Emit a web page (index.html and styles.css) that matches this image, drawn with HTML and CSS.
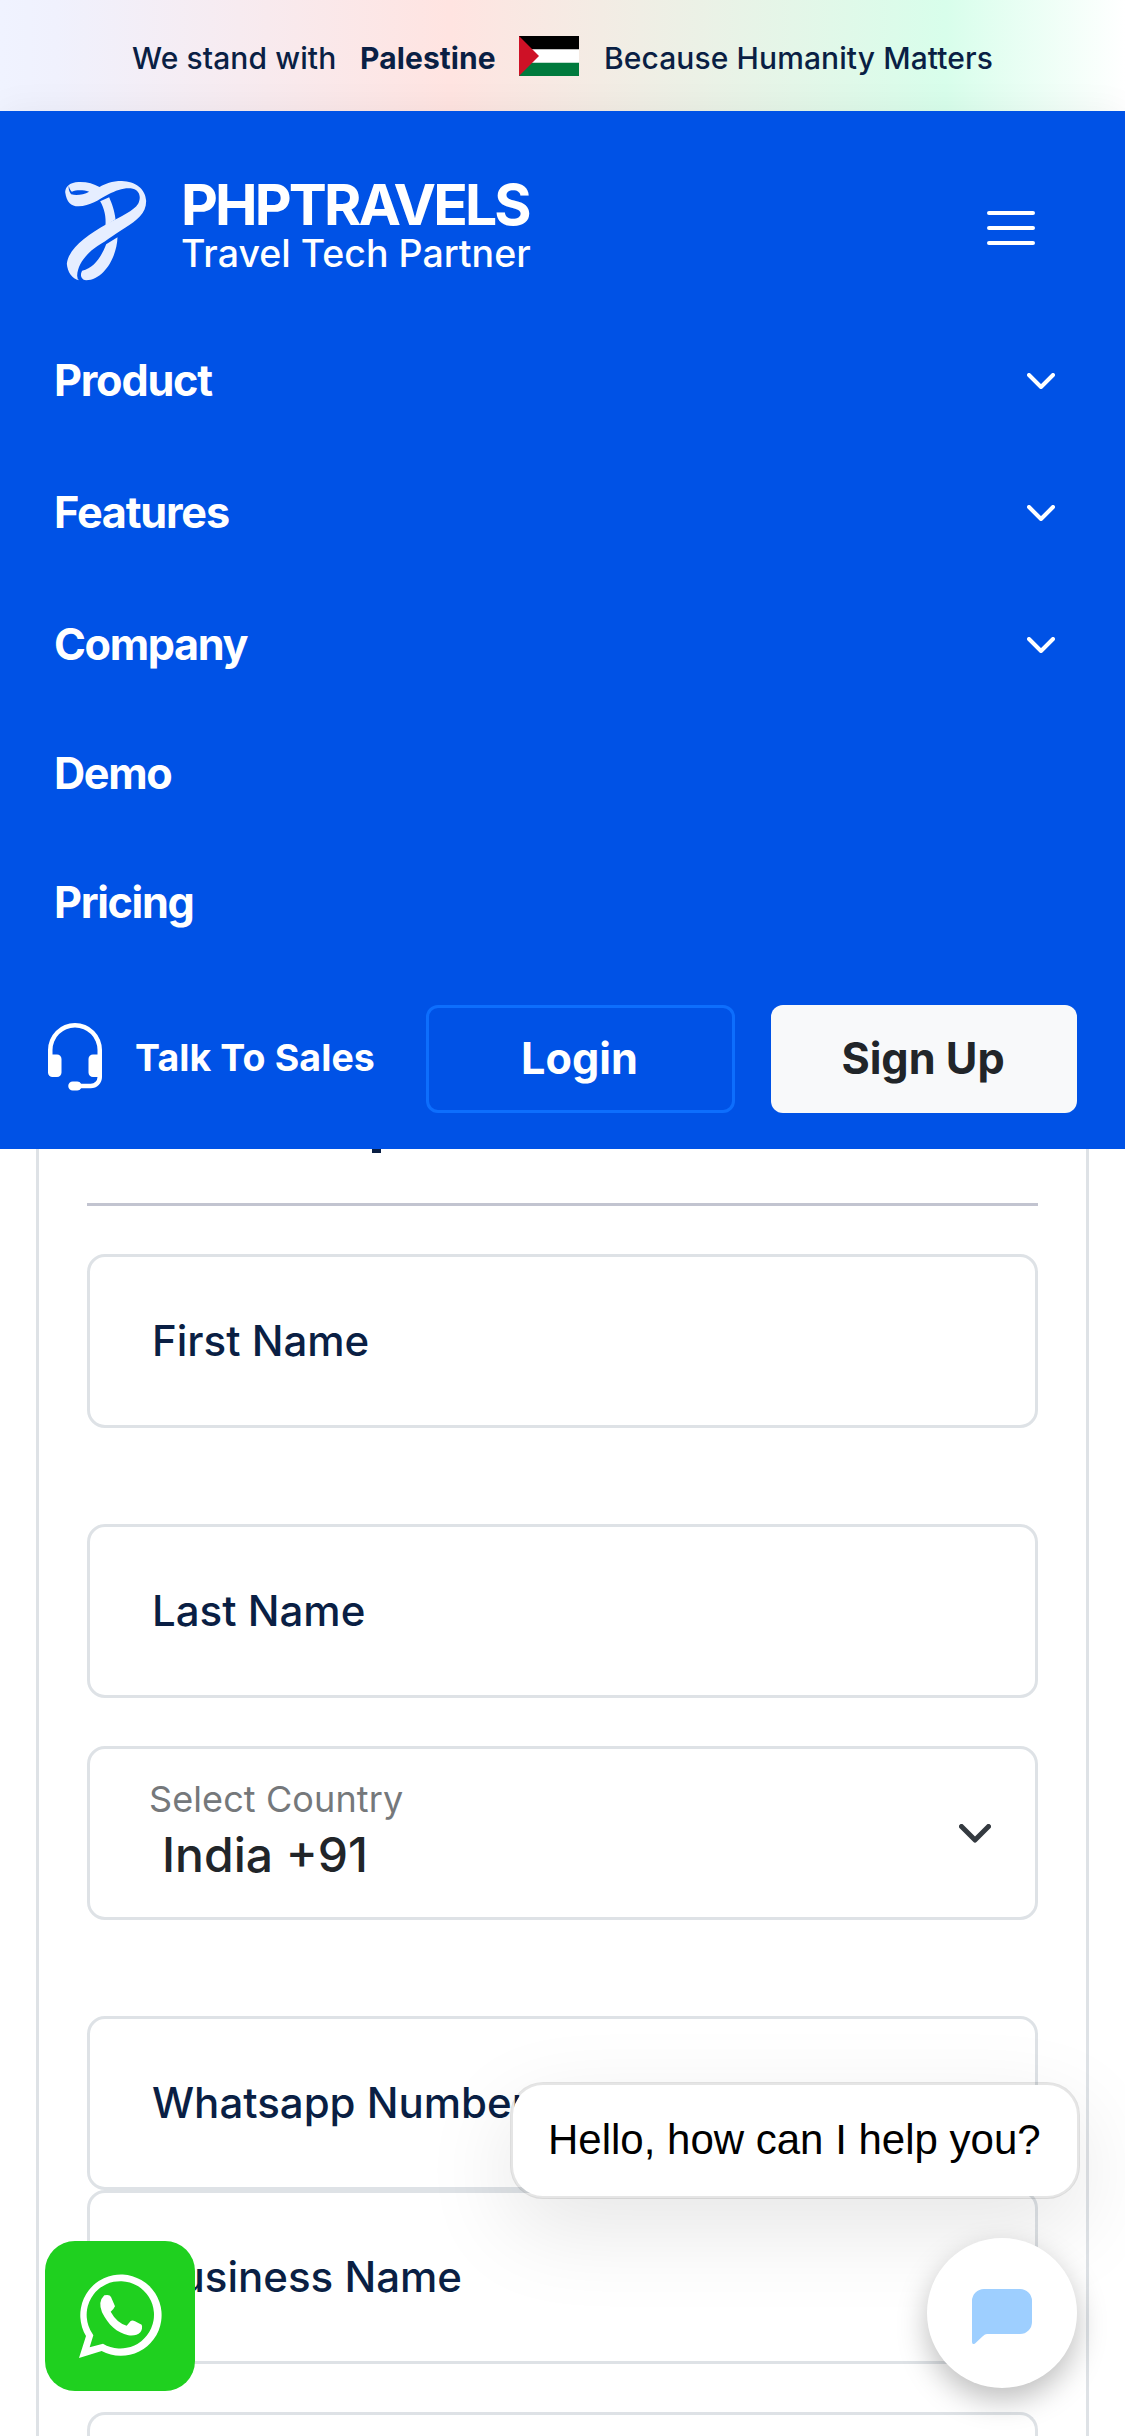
FILE: index.html
```html
<!DOCTYPE html>
<html lang="en">
<head>
<meta charset="utf-8">
<title>PHPTRAVELS</title>
<link rel="stylesheet" href="styles.css">
</head>
<body>
<div class="banner">
  <span class="stand">We stand with</span>
  <strong class="country">Palestine</strong>
  <svg class="flag" viewBox="0 0 60 40"><path fill="#fff" d="M0 0h60v40H0z"/><path d="M0 0h60v13.2H0z"/><path fill="#007a3d" d="M0 26.7h60V40H0z"/><path fill="#ce1126" d="M0 0l20 20L0 40z"/></svg>
  <span class="because">Because Humanity Matters</span>
</div>
<header class="header">
  <div class="topbar">
    <svg class="mark" viewBox="75 62 245 300" fill="#e6eeff">
      <path fill-rule="evenodd" d="M178 80C160 70 140 64 115 65C90 66 76 78 75 95C79 126 92 138 115 138C150 138 175 118 205 102C230 88 258 80 278 85C300 91 303 112 294 130C280 152 245 166 200 191C140 225 85 265 80 310C82 335 95 354 117 360Q111 356 111 346C112 312 140 278 172 257C200 240 235 214 255 202C290 180 318 160 318 122C316 85 285 63 245 62C215 62 195 70 178 80ZM95 94C110 88 130 89 147 94C130 103 110 106 93 102C87 95 84 84 86 77C88 86 91 90 95 94Z"/>
      <path d="M180 123L207 111C215 130 223 150 226 177L196 196C198 170 193 145 180 123Z"/>
      <path d="M232 231C230 290 192 358 138 360C120 358 120 340 126 331C165 322 185 285 198 252Z"/>
    </svg>
    <div class="brand"><b>PHPTRAVELS</b><span>Travel Tech Partner</span></div>
    <svg class="menu" viewBox="0 0 48 34" stroke="#fff" stroke-width="4" stroke-linecap="round"><path d="M2 2H46M2 17H46M2 32H46"/></svg>
  </div>
  <nav class="nav">
    <a class="item drop">Product<svg class="chev" viewBox="0 0 28 16"><path d="M2 2L14 14L26 2"/></svg></a>
    <a class="item drop">Features<svg class="chev" viewBox="0 0 28 16"><path d="M2 2L14 14L26 2"/></svg></a>
    <a class="item">Company<svg class="chev" viewBox="0 0 28 16"><path d="M2 2L14 14L26 2"/></svg></a>
    <a class="item">Demo</a>
    <a class="item">Pricing</a>
  </nav>
  <div class="actions">
    <svg class="headset" viewBox="0 0 16 16" fill="#fff"><path d="M8 1a5 5 0 0 0-5 5v1h1a1 1 0 0 1 1 1v3a1 1 0 0 1-1 1H3a1 1 0 0 1-1-1V6a6 6 0 1 1 12 0v6a2.5 2.5 0 0 1-2.5 2.500H9.366a1 1 0 0 1-.866.5h-1a1 1 0 1 1 0-2h1a1 1 0 0 1 .866.5H11.500A1.500 1.500 0 0 0 13 12h-1a1 1 0 0 1-1-1V8a1 1 0 0 1 1-1h1V6a5 5 0 0 0-5-5z"/></svg>
    <span class="talk">Talk To Sales</span>
    <a class="btn login">Login</a>
    <a class="btn signup">Sign Up</a>
  </div>
</header>
<main class="card">
  <div class="title-tail"></div>
  <hr class="rule">
  <form class="form">
    <div class="field gap-l">First Name</div>
    <div class="field gap-s">Last Name</div>
    <div class="field select gap-l">
      <div class="choice"><span class="hint">Select Country</span><span class="value">India +91</span></div>
      <svg class="arrow" viewBox="0 0 32 19"><path d="M2.5 2.500L16 16L29.500 2.500"/></svg>
    </div>
    <div class="field">Whatsapp Number</div>
    <div class="field gap-s">Business Name</div>
    <div class="field cut"></div>
  </form>
</main>
<a class="whatsapp">
  <svg viewBox="0 0 450 450" fill="#fff"><path fill-rule="evenodd" d="M123 285A122 122 0 1 1 170 330L102 351ZM145 283L134 319L174 308A101 101 0 1 0 141 276Z"/><path d="M178 163Q194 159 198 168L210 196Q207 204 197 212Q215 245 245 254L257 240Q262 236 270 241L290 251Q294 262 286 274Q274 286 250 283C215 275 190 252 171 214Q158 182 178 163Z"/></svg>
</a>
<div class="bubble">Hello, how can I help you?</div>
<a class="chat"><svg viewBox="0 0 60 56"><path fill="#9ecfff" d="M12 0H48A12 12 0 0 1 60 12V33A12 12 0 0 1 48 45H15Q13 45 11 47L3 54.500Q0 56 0 53V12A12 12 0 0 1 12 0Z"/></svg></a>
</body>
</html>
```
FILE: styles.css
```css
* { box-sizing: border-box; }
html, body { margin: 0; height: 2436px; overflow: hidden; }
body {
  position: relative;
  width: 1125px;
  background: #fff;
  font-family: Inter, "Liberation Sans", sans-serif;
  font-weight: 500;
  color: #0a1f44;
}
svg { display: block; flex: none; }

.banner {
  display: flex;
  align-items: center;
  height: 111px;
  padding: 0 0 0 132px;
  font-size: 30px;
  line-height: 40px;
  white-space: nowrap;
  background: linear-gradient(90deg, #f0f3ff 0%, #f0f1fd 5%, #ffe4e1 40%, #d8feeb 84%, #fff 100%);
}
.stand { width: 228px; padding-top: 5px; letter-spacing: .1px; }
.country { width: 159px; padding-top: 5px; font-weight: 700; letter-spacing: .1px; }
.flag { width: 60px; height: 40px; }
.because { margin-left: 25px; padding-top: 5px; letter-spacing: .1px; }

.header {
  height: 1038px;
  background: #0052e6;
  color: #fff;
  box-shadow: 0 0 36px rgba(0, 0, 0, .05);
  clip-path: inset(-40px 0 0 0);
}
.topbar { display: flex; height: 237px; padding: 68px 90px 0 65px; }
.mark { width: 82px; height: 100px; margin-top: 2px; }
.brand { display: flex; flex-direction: column; margin-left: 34px; }
.brand b { font-size: 57px; line-height: 52px; font-weight: 700; letter-spacing: -2.9px; }
.brand span { font-size: 37.5px; line-height: 45px; }
.menu { width: 48px; height: 34px; margin: 32px 0 0 auto; fill: none; }

.nav { display: flex; flex-direction: column; height: 657px; padding: 0 70px 0 54px; }
.item {
  display: flex;
  justify-content: space-between;
  align-items: flex-start;
  height: 129px;
  font-size: 43.2px;
  line-height: 65px;
  font-weight: 700;
  letter-spacing: -1.35px;
}
.drop { height: 132px; letter-spacing: -1.2px; }
.chev { width: 28px; height: 16px; margin-top: 25px; fill: none; stroke: #fff; stroke-width: 4; stroke-linecap: round; stroke-linejoin: round; }

.actions { display: flex; align-items: center; height: 108px; padding: 0 48px 0 39px; }
.headset { width: 72px; height: 72px; }
.talk { width: 291px; margin-left: 24px; padding-bottom: 4px; font-size: 37.5px; font-weight: 700; letter-spacing: .1px; }
.btn {
  display: flex;
  align-items: center;
  justify-content: center;
  height: 108px;
  padding: 0 2px 2px 0;
  border-radius: 12px;
  font-size: 43.2px;
  font-weight: 700;
}
.login { width: 309px; border: 3px solid #0d6efd; }
.signup { width: 306px; margin-left: 36px; background: #f8f9fa; color: #212529; }

.card {
  height: 1287px;
  margin: 0 36px;
  padding: 0 48px;
  border: solid #dee2e6;
  border-width: 0 3px;
  background: #fff;
}
.title-tail { width: 9px; height: 4px; margin-left: 285px; background: #0a1f44; }
.rule { height: 3px; margin: 50px 0 48px; border: 0; background: #c2c4d0; }
.form { display: flex; flex-direction: column; }
.field {
  display: flex;
  align-items: center;
  height: 174px;
  padding: 0 0 2px 62px;
  border: 3px solid #dee2e6;
  border-radius: 18px;
  font-size: 42px;
}
.cut { height: 24px; border-bottom: 0; border-radius: 18px 18px 0 0; }
.gap-l { margin-bottom: 96px; }
.gap-s { margin-bottom: 48px; }
.select { justify-content: space-between; padding: 0 44px 0 59px; }
.choice { display: flex; flex-direction: column; padding-bottom: 4px; }
.hint { font-size: 36px; line-height: 48px; font-weight: 400; letter-spacing: .1px; color: #75787b; }
.value { padding-left: 13px; font-size: 48px; line-height: 64px; color: #212529; }
.arrow { width: 32px; height: 19px; fill: none; stroke: #343a40; stroke-width: 5; stroke-linecap: round; stroke-linejoin: round; }

.whatsapp { position: absolute; left: 45px; top: 2241px; width: 150px; height: 150px; border-radius: 30px; background: #1fd01f; }
.bubble {
  position: absolute;
  left: 510px;
  top: 2082px;
  width: 570px;
  height: 117px;
  padding-left: 35px;
  border: 3px solid rgba(0, 0, 0, .1);
  border-radius: 33px;
  background: #fff;
  background-clip: padding-box;
  box-shadow: 0 30px 90px rgba(0, 0, 0, .1);
  font: 42px/109px "Liberation Sans", Arial, sans-serif;
  color: #000;
  white-space: nowrap;
}
.chat {
  position: absolute;
  left: 927px;
  top: 2238px;
  width: 150px;
  height: 150px;
  padding: 51px 45px;
  border-radius: 50%;
  background: #fff;
  box-shadow: 0 12px 30px rgba(0, 0, 0, .26);
}
.chat svg { width: 60px; height: 56px; }
```
